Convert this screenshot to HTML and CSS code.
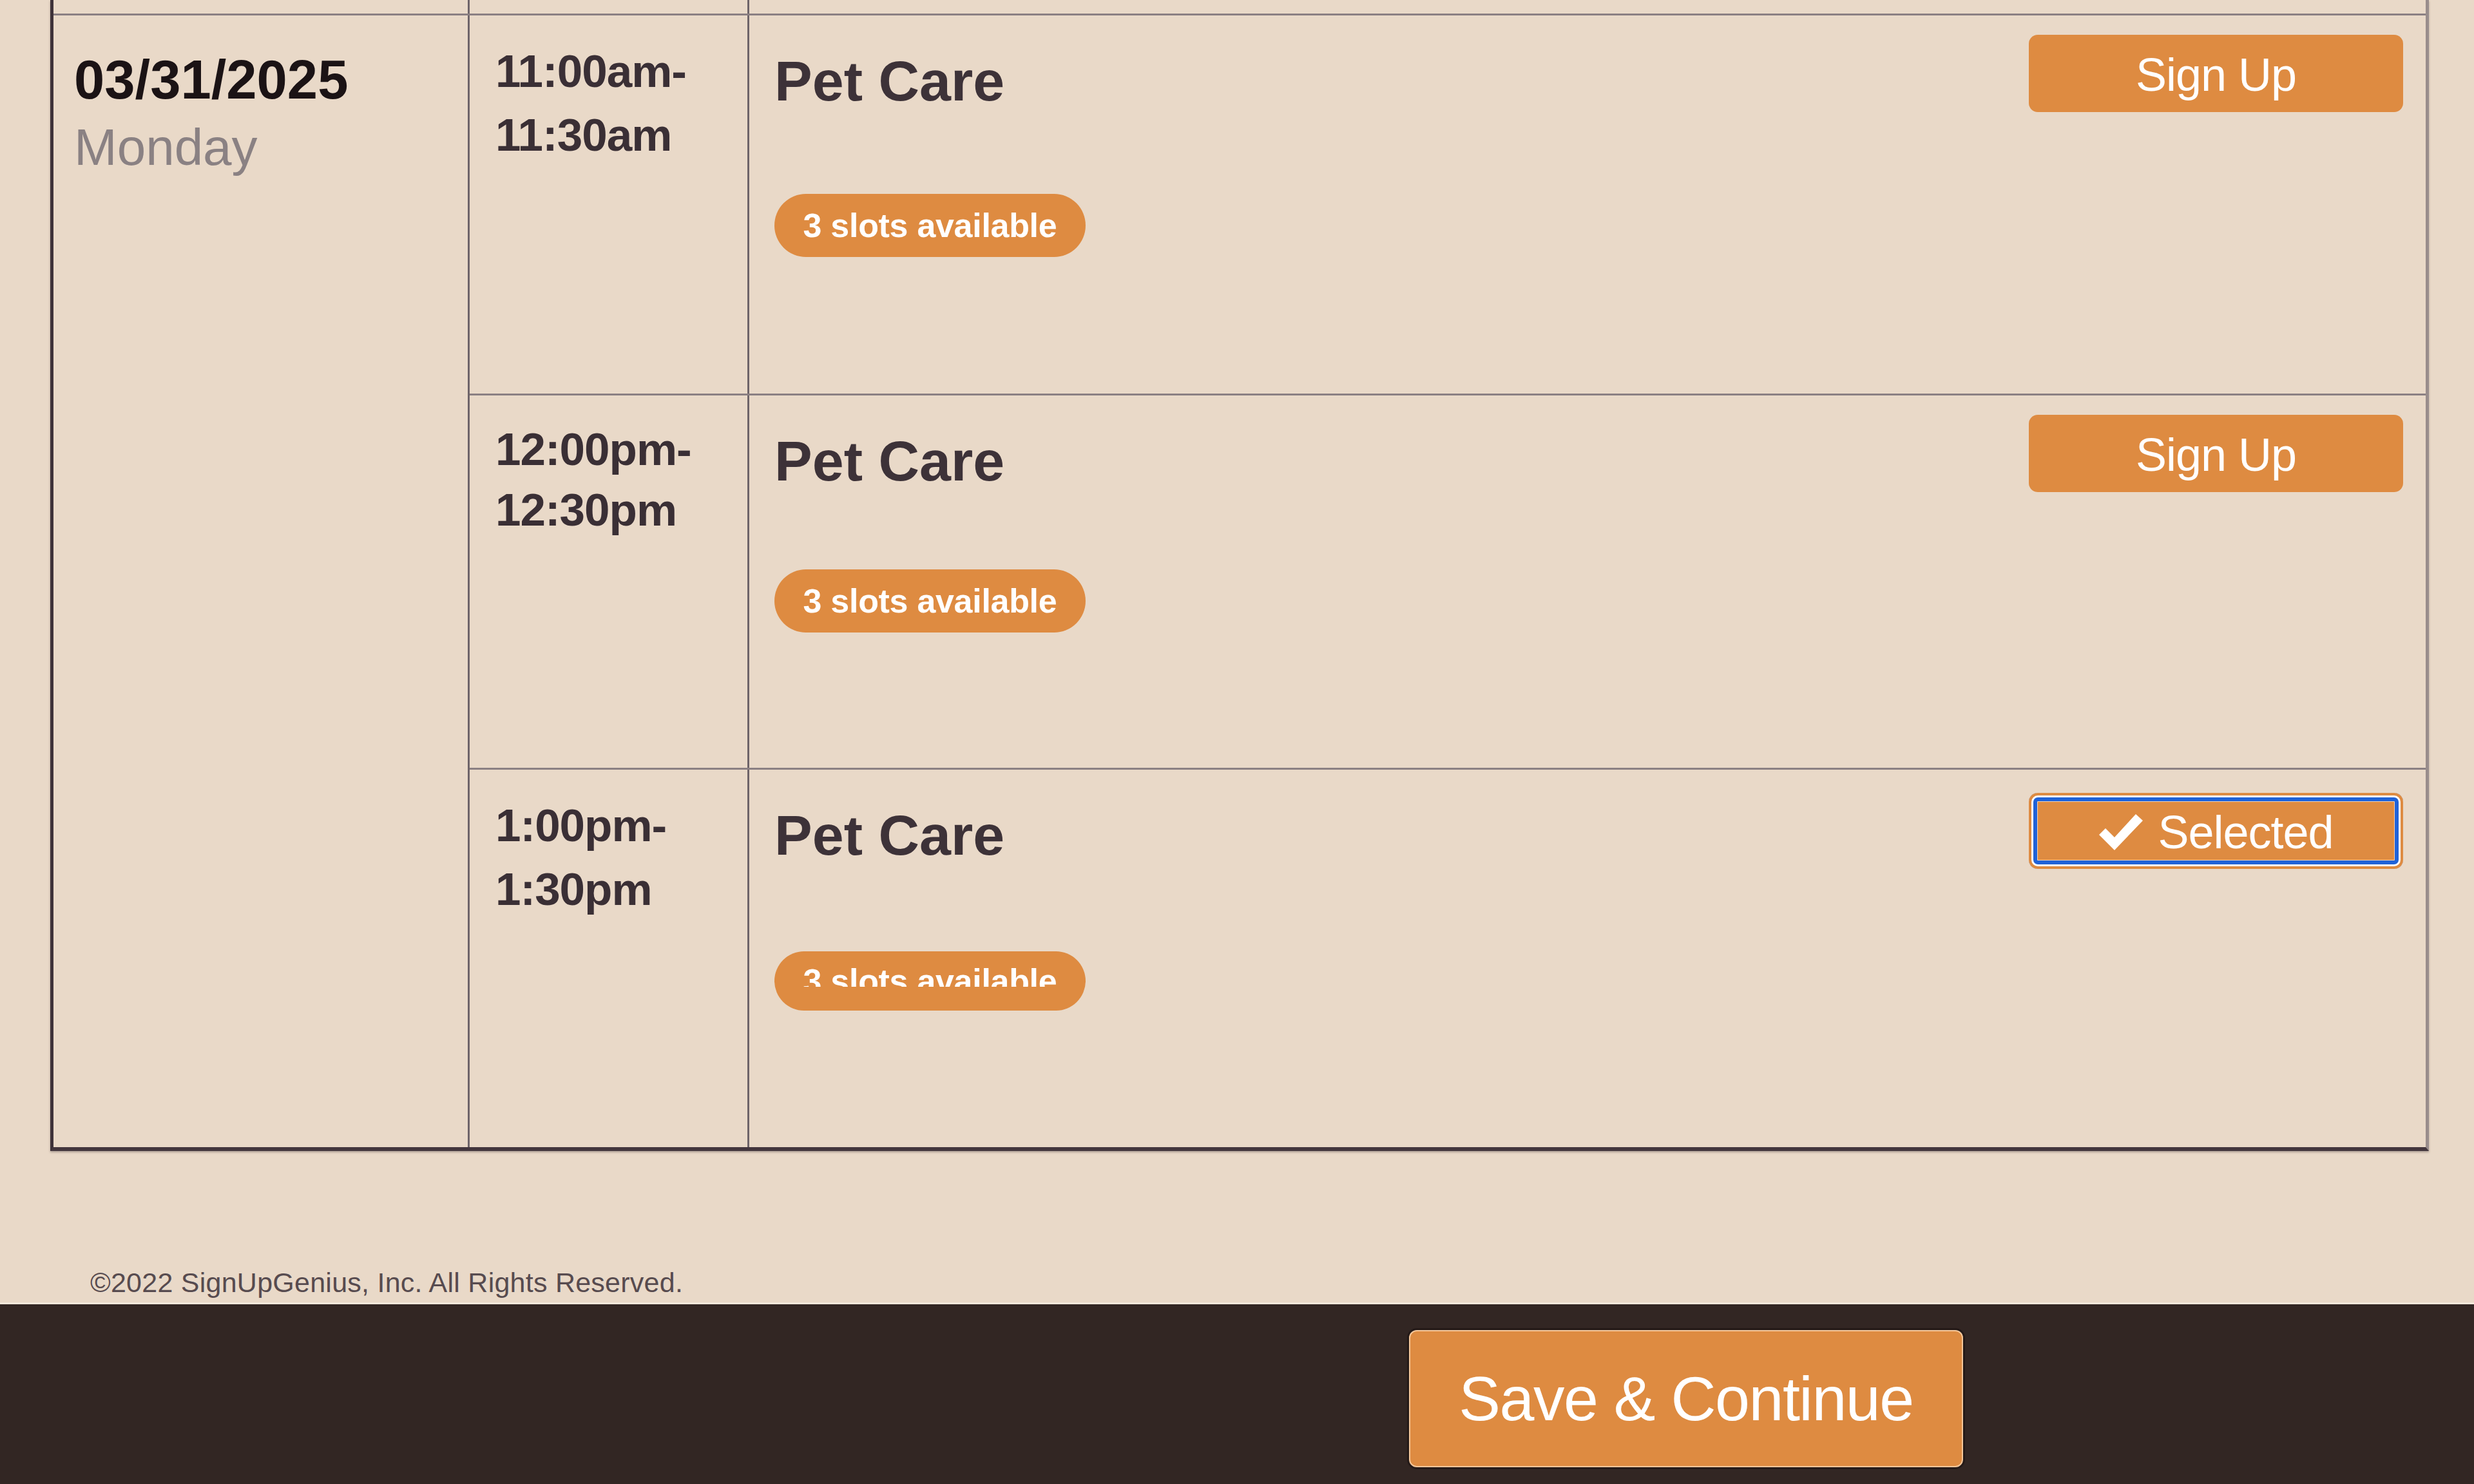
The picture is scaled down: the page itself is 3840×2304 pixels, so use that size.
FILE: index.html
```html
<!DOCTYPE html>
<html lang="en">
<head>
<meta charset="utf-8">
<title>Sign Up - Pet Care</title>
<link rel="stylesheet" href="styles.css">
</head>
<body>
<div class="page">
  <div class="sheet">
    <div class="prev-row">
      <div class="prev-cell prev-date"></div>
      <div class="prev-cell prev-time"></div>
      <div class="prev-cell prev-event"></div>
    </div>
    <div class="day">
      <div class="date-cell">
        <div class="date">03/31/2025</div>
        <div class="weekday">Monday</div>
      </div>
      <div class="slots">
        <div class="slot slot-1">
          <div class="time">11:00am-<br>11:30am</div>
          <div class="event">
            <div class="event-info">
              <div class="event-title">Pet Care</div>
              <span class="badge"><span class="badge-text">3 slots available</span></span>
            </div>
            <button class="btn-signup" type="button">Sign Up</button>
          </div>
        </div>
        <div class="slot slot-2">
          <div class="time time-tight">12:00pm-<br>12:30pm</div>
          <div class="event">
            <div class="event-info">
              <div class="event-title">Pet Care</div>
              <span class="badge badge-up"><span class="badge-text">3 slots available</span></span>
            </div>
            <button class="btn-signup" type="button">Sign Up</button>
          </div>
        </div>
        <div class="slot slot-3">
          <div class="time">1:00pm-<br>1:30pm</div>
          <div class="event">
            <div class="event-info">
              <div class="event-title">Pet Care</div>
              <span class="badge badge-short"><span class="badge-text badge-clipped">3 slots available</span></span>
            </div>
            <button class="btn-signup btn-selected" type="button">
              <svg class="check" viewBox="0 0 70 58" width="70" height="58" aria-hidden="true">
                <path d="M1 33 L11 23 L25 37 L58 1 L69 11 L25 57 Z" fill="#ffffff"/>
              </svg>
              <span>Selected</span>
            </button>
          </div>
        </div>
      </div>
    </div>
  </div>
  <div class="copyright">©2022 SignUpGenius, Inc. All Rights Reserved.</div>
  <div class="footer">
    <button class="btn-save" type="button">Save &amp; Continue</button>
  </div>
</div>
</body>
</html>
```

FILE: styles.css
```css
* {
  box-sizing: border-box;
}

html,
body {
  margin: 0;
  padding: 0;
}

body {
  background: #e9d9c8;
  font-family: "Liberation Sans", Arial, Helvetica, sans-serif;
  width: 3840px;
  height: 2304px;
  overflow: hidden;
}

.page {
  display: flex;
  flex-direction: column;
  height: 2304px;
}

/* ---------- table ---------- */
.sheet {
  margin-left: 78px;
  width: 3692px;
  border-left: 5px solid #3f333a;
  border-right: 5px solid #998d8c;
  border-bottom: 6px solid #43363d;
  box-shadow: 0 2px 3px rgba(60, 45, 50, 0.35);
}

.prev-row {
  display: grid;
  grid-template-columns: 646px 434px 1fr;
  height: 24px;
  border-bottom: 3px solid #8b8083;
}

.prev-cell {
  border-right: 3px solid #6e6469;
}

.prev-event {
  border-right: none;
}

.day {
  display: grid;
  grid-template-columns: 646px 1fr;
}

.date-cell {
  border-right: 3px solid #6e6469;
  padding: 50px 0 0 32px;
}

.date {
  font-size: 85px;
  font-weight: 700;
  line-height: 100px;
  color: #1b1315;
}

.weekday {
  font-size: 80px;
  line-height: 110px;
  color: #8a8183;
}

.slots {
  display: flex;
  flex-direction: column;
}

.slot {
  display: grid;
  grid-template-columns: 434px 1fr;
  border-bottom: 3px solid #8b8083;
}

.slot-1 {
  height: 590px;
}

.slot-2 {
  height: 581px;
}

.slot-3 {
  height: 586px;
  border-bottom: none;
}

.time {
  border-right: 3px solid #6e6469;
  padding: 37px 0 0 40px;
  font-size: 71px;
  font-weight: 700;
  line-height: 99px;
  letter-spacing: -1px;
  color: #3a2f35;
}

.time-tight {
  line-height: 94px;
}

.event {
  display: flex;
  justify-content: space-between;
  align-items: flex-start;
  padding: 30px 35px 0 39px;
}

.event-info {
  display: flex;
  flex-direction: column;
  align-items: flex-start;
}

.event-title {
  margin-top: 22px;
  font-size: 88px;
  font-weight: 700;
  line-height: 100px;
  color: #3d3238;
}

.badge {
  display: inline-flex;
  align-items: center;
  justify-content: center;
  margin-top: 125px;
  width: 483px;
  height: 98px;
  border-radius: 49px;
  background: #de8b41;
}

.badge-up {
  margin-top: 118px;
}

.badge-short {
  margin-top: 130px;
  height: 92px;
}

.badge-text {
  display: block;
  font-size: 52px;
  font-weight: 700;
  line-height: 52px;
  letter-spacing: -0.3px;
  color: #ffffff;
}

.badge-clipped {
  clip-path: inset(0 0 17px 0);
}

.btn-signup {
  display: flex;
  align-items: center;
  justify-content: center;
  width: 581px;
  height: 120px;
  padding: 3px 0 0;
  border: none;
  border-radius: 14px;
  background: #de8b41;
  color: #ffffff;
  font-family: "Liberation Sans", Arial, Helvetica, sans-serif;
  font-size: 72px;
  letter-spacing: -1px;
  cursor: pointer;
}

.btn-selected {
  margin-top: 6px;
  height: 118px;
  gap: 22px;
  box-shadow:
    inset 0 0 0 4px #de8b41,
    inset 0 0 0 7px #ffffff,
    inset 0 0 0 13px #1f62d8,
    inset 0 0 0 14px #f3d3b3;
}

.check {
  display: block;
  width: 70px;
  height: 58px;
}

/* ---------- footer ---------- */
.copyright {
  margin-top: 179px;
  padding-left: 140px;
  font-size: 43px;
  line-height: 50px;
  letter-spacing: 0.25px;
  color: #574b4f;
}

.footer {
  flex: 0 0 282px;
  margin-top: auto;
  display: flex;
  justify-content: flex-end;
  align-items: flex-start;
  padding: 40px 793px 0 0;
  background: #322623;
  border-top: 3px solid #f3e7da;
}

.btn-save {
  width: 860px;
  height: 213px;
  padding: 0;
  border: 2px solid #f5c79a;
  border-radius: 12px;
  background: #de8b41;
  color: #ffffff;
  font-family: "Liberation Sans", Arial, Helvetica, sans-serif;
  font-size: 97px;
  letter-spacing: -1.5px;
  box-shadow: 0 0 0 3px #241a18;
  cursor: pointer;
}
```
